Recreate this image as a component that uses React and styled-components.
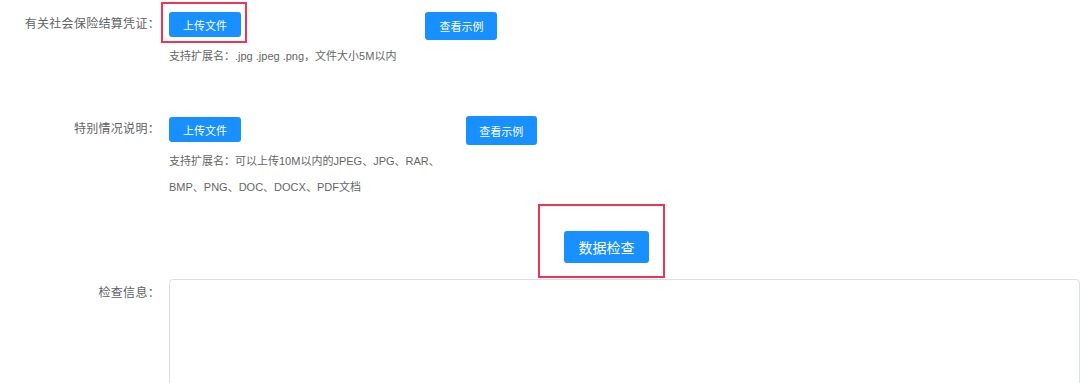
import React from 'react';
import styled, { createGlobalStyle } from 'styled-components';

const GlobalStyle = createGlobalStyle`
    body {
        margin: 0;
        background: #ffffff;
        overflow: hidden;
        font-family: "Liberation Sans", "Noto Sans CJK SC", sans-serif;
    }
`;

const Page = styled.div`
    width: 1080px;
    height: 383px;
    overflow: hidden;
    padding-top: 12px;
    box-sizing: border-box;
`;

const FormRow = styled.div`
    display: flex;
    align-items: flex-start;
    margin-top: ${(p) => p.$top || 0}px;
`;

const Label = styled.div`
    width: 169px;
    flex-shrink: 0;
    box-sizing: border-box;
    padding-right: 9px;
    text-align: right;
    font-size: 12px;
    letter-spacing: 0.3px;
    color: #606266;
    line-height: ${(p) => p.$lh || 25}px;
    padding-top: ${(p) => p.$pt || 0}px;
`;

const Content = styled.div`
    display: flex;
    align-items: flex-start;
    flex: 1;
`;

const UploadBlock = styled.div`
    display: flex;
    flex-direction: column;
    align-items: flex-start;
`;

const Highlight = styled.div`
    position: relative;
    display: inline-flex;
    &::after {
        content: "";
        position: absolute;
        top: -${(p) => p.$t}px;
        left: -${(p) => p.$l}px;
        right: -${(p) => p.$r}px;
        bottom: -${(p) => p.$b}px;
        border: 2px solid #ee3556;
        pointer-events: none;
    }
`;

const Button = styled.button`
    display: inline-flex;
    align-items: center;
    justify-content: center;
    background: #1890ff;
    border: none;
    border-radius: 3px;
    color: #ffffff;
    font-family: inherit;
    padding: 0;
    width: ${(p) => p.$w}px;
    height: ${(p) => p.$h}px;
    font-size: ${(p) => p.$fs || 11}px;
    margin-top: ${(p) => p.$mt || 0}px;
`;

const ExampleButton = styled(Button)`
    margin-left: ${(p) => p.$ml}px;
`;

const Hint = styled.div`
    margin-top: 6px;
    font-size: 11px;
    line-height: 26px;
    color: #666666;
    white-space: nowrap;
`;

const CheckRow = styled.div`
    margin-top: 31px;
    padding-left: 564px;
    display: flex;
`;

const InfoBox = styled.div`
    width: 1000px;
    height: 160px;
    border: 1px solid #dcdfe6;
    border-radius: 4px;
    box-sizing: border-box;
    background: #fff;
`;

export default function App() {
    return (
        <>
            <GlobalStyle />
            <Page>
                <FormRow>
                    <Label>有关社会保险结算凭证：</Label>
                    <Content>
                        <UploadBlock>
                            <Highlight $t={10} $l={8} $r={6} $b={6}>
                                <Button $w={72} $h={25}>上传文件</Button>
                            </Highlight>
                            <Hint>支持扩展名：.jpg .jpeg .png，文件大小5M以内</Hint>
                        </UploadBlock>
                        <ExampleButton $w={72} $h={28} $ml={29}>查看示例</ExampleButton>
                    </Content>
                </FormRow>

                <FormRow $top={48}>
                    <Label>特别情况说明：</Label>
                    <Content>
                        <UploadBlock>
                            <Button $w={72} $h={25}>上传文件</Button>
                            <Hint>
                                支持扩展名：可以上传10M以内的JPEG、JPG、RAR、
                                <br />
                                BMP、PNG、DOC、DOCX、PDF文档
                            </Hint>
                        </UploadBlock>
                        <ExampleButton $w={71} $h={29} $mt={-1} $ml={26}>查看示例</ExampleButton>
                    </Content>
                </FormRow>

                <CheckRow>
                    <Highlight $t={27} $l={26} $r={16} $b={15}>
                        <Button $w={85} $h={32} $fs={14}>数据检查</Button>
                    </Highlight>
                </CheckRow>

                <FormRow $top={16}>
                    <Label $pt={2} $lh={24}>检查信息：</Label>
                    <InfoBox />
                </FormRow>
            </Page>
        </>
    );
}
